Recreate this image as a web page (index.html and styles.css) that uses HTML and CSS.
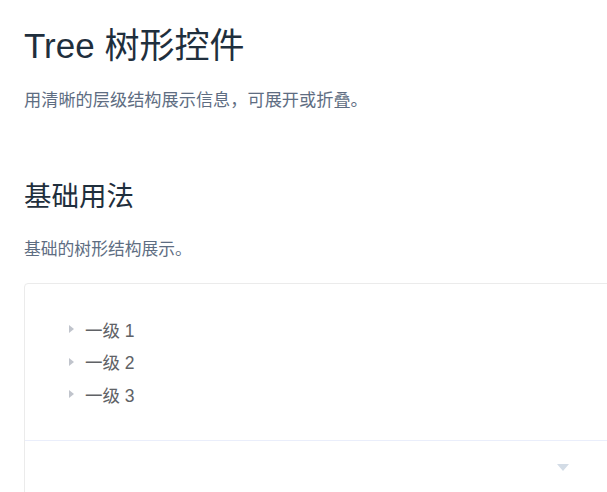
FILE: index.html
```html
<!DOCTYPE html>
<html lang="zh-CN">
<head>
<meta charset="utf-8">
<link rel="stylesheet" href="styles.css">
</head>
<body>
<main class="page">
  <h2 class="title">Tree 树形控件</h2>
  <p class="lead">用清晰的层级结构展示信息，可展开或折叠。</p>
  <h3 class="section">基础用法</h3>
  <p class="desc">基础的树形结构展示。</p>
  <div class="demo">
    <div class="source">
      <ul class="tree">
        <li class="node"><span class="caret"></span><span class="label">一级 1</span></li>
        <li class="node"><span class="caret"></span><span class="label">一级 2</span></li>
        <li class="node"><span class="caret"></span><span class="label">一级 3</span></li>
      </ul>
    </div>
    <div class="control"><span class="down"></span></div>
  </div>
</main>
</body>
</html>
```
FILE: styles.css
```css
html, body {
  margin: 0;
  padding: 0;
  background: #fff;
  overflow: hidden;
}
body {
  font-family: "Liberation Sans", "Noto Sans CJK SC", sans-serif;
  color: #1f2f3d;
}
.page {
  padding: 0 0 0 24px;
  width: 1100px;
}
.title {
  margin: 0;
  padding-top: 22px;
  font-size: 35px;
  font-weight: 400;
  line-height: 48px;
  color: #1f2f3d;
}
.lead {
  margin: 17px 0 0;
  font-size: 17.2px;
  line-height: 26px;
  color: #5e6d82;
}
.section {
  margin: 64px 0 0;
  font-size: 27.5px;
  font-weight: 400;
  line-height: 40px;
  color: #1f2f3d;
}
.desc {
  margin: 20px 0 0;
  font-size: 16.8px;
  line-height: 26px;
  color: #5e6d82;
}
.demo {
  margin-top: 20px;
  width: 1076px;
  border: 1px solid #ebebeb;
  border-radius: 4px;
}
.source {
  padding: 29px 30px;
}
.tree {
  list-style: none;
  margin: 0;
  padding: 0;
}
.node {
  display: flex;
  align-items: center;
  height: 32.5px;
  font-size: 17.5px;
  color: #606266;
}
.caret {
  display: flex;
  align-items: center;
  justify-content: center;
  width: 15px;
  height: 15px;
  padding: 7.5px;
}
.caret::before {
  content: "";
  border-style: solid;
  border-width: 4.5px 0 4.5px 5.5px;
  border-color: transparent transparent transparent #c0c4cc;
  margin-left: 2px;
}
.control {
  border-top: 1px solid #eaeefb;
  height: 54px;
  display: flex;
  align-items: center;
  justify-content: center;
}
.down {
  border-style: solid;
  border-width: 7px 6.5px 0 6.5px;
  border-color: #d3dce6 transparent transparent transparent;
}
```
